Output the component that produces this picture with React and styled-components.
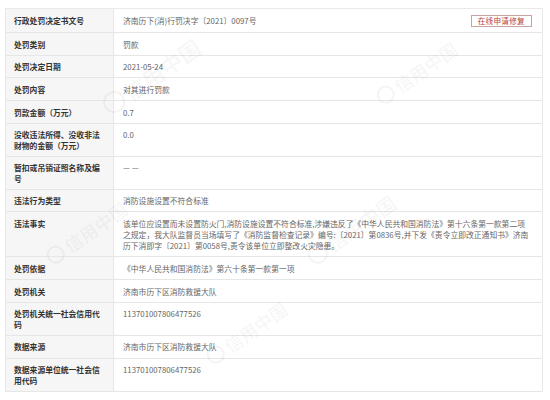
import React from 'react';
import styled, { createGlobalStyle } from 'styled-components';

const GlobalStyle = createGlobalStyle`
  html, body {
    margin: 0;
    background: #fff;
  }
  body {
    font-family: "Noto Sans CJK SC", "Noto Sans", sans-serif;
  }
`;

const Page = styled.div`
  position: relative;
  width: 550px;
  height: 400px;
  padding: 8px 7px 0 5px;
  box-sizing: border-box;
  overflow: hidden;
`;

const Table = styled.div`
  position: relative;
  border: 1px solid #e9e9e9;
  border-bottom: none;
  font-size: 7.8px;
  line-height: 11px;
`;

const Row = styled.div`
  display: grid;
  grid-template-columns: 108px 1fr;
  border-bottom: 1px solid #e6e6e6;
`;

// vertical padding per number of text lines, tuned to the row heights
const padY = {
  1: '5.6px 10px 5.1px',
  2: '5px 10px 5px',
  3: '5.5px 10px 5.5px',
  head: '5.5px 10px 5.5px',
};

const Label = styled.div`
  background: rgba(240, 240, 240, 0.6);
  border-right: 1px solid #e6e6e6;
  padding: ${(p) => padY[p.$lines || 1]};
  padding-left: 8px;
  color: #333;
  font-weight: bold;
  display: flex;
  align-items: ${(p) => (p.$lines === 'head' ? 'center' : 'flex-start')};
`;

const Value = styled.div`
  display: flex;
  align-items: ${(p) => (p.$lines === 'head' ? 'center' : 'flex-start')};
  justify-content: space-between;
  padding: ${(p) => padY[p.$lines || 1]};
  padding-left: 9px;
  color: #666;
  white-space: ${(p) => (p.$lines === 3 ? 'nowrap' : 'normal')};
`;

const RepairButton = styled.span`
  display: inline-block;
  border: 1px solid #c9a3a3;
  color: #b8423a;
  padding: 0 6px;
  line-height: 10px;
  font-size: 7.6px;
  letter-spacing: 0.3px;
  background: #fff;
`;

const Mark = styled.div`
  position: absolute;
  top: ${(p) => p.$top}px;
  left: ${(p) => p.$left}px;
  transform: rotate(-35deg);
  color: rgba(0, 0, 0, 0.045);
  font-size: ${(p) => p.$size}px;
  font-weight: bold;
  white-space: nowrap;
  pointer-events: none;
  display: flex;
  align-items: center;
  gap: 3px;
`;

const MarkRing = styled.span`
  display: inline-block;
  width: ${(p) => p.$size * 0.8}px;
  height: ${(p) => p.$size * 0.8}px;
  border: 2px solid rgba(0, 0, 0, 0.045);
  border-radius: 50%;
`;

const rows = [
  { label: '处罚类别', value: '罚款' },
  { label: '处罚决定日期', value: '2021-05-24' },
  { label: '处罚内容', value: '对其进行罚款' },
  { label: '罚款金额（万元）', value: '0.7' },
  { label: '没收违法所得、没收非法财物的金额（万元）', value: '0.0', lines: 2 },
  { label: '暂扣或吊销证照名称及编号', value: '— —', lines: 2 },
  { label: '违法行为类型', value: '消防设施设置不符合标准' },
];

const tail = [
  { label: '处罚依据', value: '《中华人民共和国消防法》第六十条第一款第一项' },
  { label: '处罚机关', value: '济南市历下区消防救援大队' },
  { label: '处罚机关统一社会信用代码', value: '113701007806477526', lines: 2 },
  { label: '数据来源', value: '济南市历下区消防救援大队' },
  { label: '数据来源单位统一社会信用代码', value: '113701007806477526', lines: 2 },
];

const marks = [
  { top: 60, left: 95, size: 22 },
  { top: 60, left: 370, size: 18 },
  { top: 220, left: 40, size: 18 },
  { top: 215, left: 300, size: 20 },
  { top: 320, left: 200, size: 18 },
];

function App() {
  return (
    <Page>
      <GlobalStyle />
      <Table>
        <Row>
          <Label $lines="head">行政处罚决定书文号</Label>
          <Value $lines="head">
            <span>济南历下(消)行罚决字〔2021〕0097号</span>
            <RepairButton>在线申请修复</RepairButton>
          </Value>
        </Row>
        {rows.map((r) => (
          <Row key={r.label}>
            <Label $lines={r.lines}>{r.label}</Label>
            <Value $lines={r.lines}>{r.value}</Value>
          </Row>
        ))}
        <Row>
          <Label $lines={3}>违法事实</Label>
          <Value $lines={3}>
            <span>
              该单位应设置而未设置防火门,消防设施设置不符合标准,涉嫌违反了《中华人民共和国消防法》第十六条第一款第二项
              <br />
              之规定，我大队监督员当场填写了《消防监督检查记录》编号:〔2021〕第0836号,并下发《责令立即改正通知书》济南
              <br />
              历下消即字〔2021〕第0058号,责令该单位立即整改火灾隐患。
            </span>
          </Value>
        </Row>
        {tail.map((r) => (
          <Row key={r.label}>
            <Label $lines={r.lines}>{r.label}</Label>
            <Value $lines={r.lines}>{r.value}</Value>
          </Row>
        ))}
      </Table>
      {marks.map((m, i) => (
        <Mark key={i} $top={m.top} $left={m.left} $size={m.size}>
          <MarkRing $size={m.size} />
          信用中国
        </Mark>
      ))}
    </Page>
  );
}

export default App;
